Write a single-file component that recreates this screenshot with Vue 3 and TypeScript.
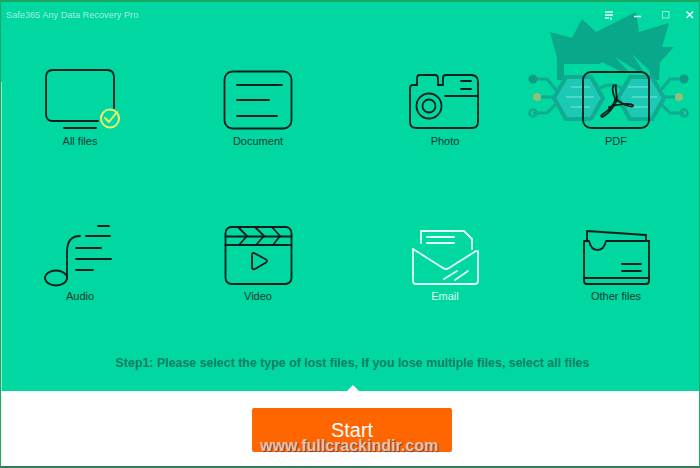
<script setup lang="ts">
const appTitle = 'Safe365 Any Data Recovery Pro'
const hint = 'Step1: Please select the type of lost files, If you lose multiple files, select all files'
</script>

<template>
  <div class="window">
    <div class="panel">
      <svg class="mascot" viewBox="525 10 170 115" width="170" height="115">
        <path class="hair" d="M550 32 L572 38 L582 19 L596 32 L636 12 L639 32 L669 23 L662 47 L674 47 L660 62 L659 80 L652 80 L649 70 L632 54 L644 72 L639 72 L615 57 L629 72 L622 72 L602 62 L600 64 L564 64 L564 80 L557 80 L557 58 Z" />
        <g class="wire">
          <path d="M533 79 H547 L557 91 M537 97 H553 M533 113 H547 L557 103" />
          <path d="M684 79 H670 L660 91 M679 97 H664 M684 113 H670 L660 103" />
          <path d="M600 88 Q610 82 622 88" />
        </g>
        <circle class="node" cx="533" cy="79" r="4.500" />
        <circle class="node-y" cx="537" cy="97" r="4" />
        <circle class="node-o" cx="533" cy="113" r="3.500" />
        <circle class="node" cx="684" cy="79" r="4.500" />
        <circle class="node-y" cx="679" cy="97" r="4" />
        <circle class="node-o" cx="684" cy="113" r="3.500" />
        <path class="hex" d="M566 77 H591 L603 98 L591 119 H566 L554 98 Z" />
        <path class="hex" d="M630 77 H652 L664 98 L652 119 H630 L618 98 Z" />
        <path class="glass" d="M571 87 H590 M566 97 H594 M571 107 H590 M628 87 H650 M632 97 H657 M628 107 H650" />
      </svg>

      <header class="titlebar">
        <span class="app-title">{{ appTitle }}</span>
        <div class="controls">
          <svg viewBox="0 0 9 9" width="9" height="9">
            <path d="M0 1 H8 M0 4 H8 M0 7 H4" stroke="#e4fff6" stroke-width="1.6" />
            <path d="M6 6 V9 M5 8 H7" stroke="#e4fff6" />
          </svg>
          <svg viewBox="0 0 8 8" width="8" height="8">
            <path d="M0 5.5 H7" stroke="#d8fff2" stroke-width="1.5" />
          </svg>
          <svg viewBox="0 0 8 8" width="8" height="8">
            <rect x="0.5" y="0.5" width="6.5" height="6.5" fill="none" stroke="#9cecd4" />
          </svg>
          <svg class="close" viewBox="0 0 8 8" width="8" height="8">
            <path d="M0.5 0.5 L7 7 M7 0.5 L0.5 7" stroke="#eafff9" stroke-width="1.5" />
          </svg>
        </div>
      </header>

      <div class="tiles">
        <div class="tile">
          <svg class="icon" viewBox="29 66 100 68">
            <path d="M97 121 H52 Q45 121 45 114 V77 Q45 70 52 70 H106 Q113 70 113 77 V108" />
            <path d="M63 128 H95" />
            <g class="check">
              <circle cx="109" cy="118.500" r="9" />
              <path d="M104 118 L108 122 L116 112" />
            </g>
          </svg>
          <span>All files</span>
        </div>

        <div class="tile">
          <svg class="icon" viewBox="208 66 100 68">
            <rect x="224.500" y="71.500" width="67" height="57" rx="8" />
            <path d="M237 85 H282 M237 100 H269 M237 116 H277" />
          </svg>
          <span>Document</span>
        </div>

        <div class="tile">
          <svg class="icon" viewBox="395 66 100 68">
            <path d="M410 88 Q410 85 413 85 H417 V78 Q417 75 420 75 H435 Q438 75 438 78 V85 H443 V78 Q443 75 446 75 H471 Q478 75 478 82 V122 Q478 128 472 128 H416 Q410 128 410 122 Z" />
            <path d="M461 81 H471 M461 89 H471 M445 96 H478" />
            <circle cx="429" cy="106" r="12.500" />
            <circle cx="429" cy="106" r="6.500" />
          </svg>
          <span>Photo</span>
        </div>

        <div class="tile">
          <svg class="icon" viewBox="566 66 100 68">
            <rect x="583" y="72" width="66" height="56" rx="8" />
            <path d="M614 85 C611 89 613 94 615 98 C616 103 608 111 603 114 C600 116 601 118 604 116 C609 113 614 106 617 100 C622 104 631 108 633 106 C634 103 620 103 609 107 M616 85 C615 89 617 94 617 100" />
          </svg>
          <span>PDF</span>
        </div>

        <div class="tile">
          <svg class="icon" viewBox="30 221 100 68">
            <ellipse cx="56" cy="278" rx="11" ry="7.500" />
            <path d="M67 278 V252 Q67 236 80 236 M86 236 H110 M98 226 H109 M76 248 H101 M76 259 H111 M76 270 H93" />
          </svg>
          <span>Audio</span>
        </div>

        <div class="tile">
          <svg class="icon" viewBox="208 221 100 68">
            <rect x="225.500" y="227" width="66" height="57" rx="6" />
            <path d="M225.500 236.500 H291.500 M225.500 245 H291.500" />
            <path d="M238 227 L247 236 L239 245 M255 227 L264 236 L256 245 M272 227 L280 236 L273 245" />
            <path d="M252 255 Q252 252 255 253.500 L266 259.500 Q268 261 266 262.500 L255 269 Q252 270 252 267 Z" />
          </svg>
          <span>Video</span>
        </div>

        <div class="tile light">
          <svg class="icon" viewBox="395 221 100 68">
            <path d="M421 243 V231 H464 L472 239 V249" />
            <path d="M427 237 H454 M427 243 H454" />
            <path d="M413 249 V281 Q413 284 416 284 H475 Q478 284 478 281 V251" />
            <path d="M413 249 L443 268 Q446 270 449 268 L476 251" />
            <path d="M444 279 L457 271 M455 280 L468 271" />
          </svg>
          <span>Email</span>
        </div>

        <div class="tile">
          <svg class="icon" viewBox="566 221 100 68">
            <path d="M587 241 V231 L646 235 V241" />
            <path d="M584 241 H589 Q591 250 597.500 250 Q604 250 606 241 H649 V281 Q649 284 646 284 H587 Q584 284 584 281 Z" />
            <path d="M584 278 H649 M622 264 H641 M622 271 H641" />
          </svg>
          <span>Other files</span>
        </div>
      </div>

      <p class="hint">{{ hint }}</p>
    </div>

    <div class="foot">
      <button class="start" type="button">Start</button>
    </div>

    <div class="watermark">www.fullcrackindir.com</div>
  </div>
</template>

<style>
html,
body {
  margin: 0;
  background: #fff;
}
</style>

<style scoped>
.window {
  position: relative;
  box-sizing: border-box;
  width: 700px;
  height: 468px;
  display: flex;
  flex-direction: column;
  border: 1px solid #1aa862;
  border-top-width: 2px;
  border-bottom: 2px solid #2f7d52;
  background: #fff;
  font-family: "Liberation Sans", Arial, sans-serif;
  overflow: hidden;
}

.panel {
  position: relative;
  height: 389px;
  flex: none;
  background: #00d7a1;
}

.panel::before {
  content: "";
  position: absolute;
  left: 0;
  top: 80px;
  bottom: 0;
  width: 1px;
  background: #8ee8cc;
}

.panel::after {
  content: "";
  position: absolute;
  left: 346px;
  bottom: 0;
  border-left: 6px solid transparent;
  border-right: 6px solid transparent;
  border-bottom: 6px solid #fff;
}

.mascot {
  position: absolute;
  left: 524px;
  top: 8px;
}

.hair {
  fill: #0aa88a;
}

.wire {
  fill: none;
  stroke: #10ab90;
  stroke-width: 3;
}

.node {
  fill: #0c9d83;
}

.node-y {
  fill: #8fc07a;
}

.node-o {
  fill: none;
  stroke: #10ab90;
  stroke-width: 2.500;
}

.hex {
  fill: #1cc9b4;
  stroke: #10ab90;
  stroke-width: 4;
}

.glass {
  fill: none;
  stroke: #7fe8d8;
  stroke-width: 1;
}

.titlebar {
  position: relative;
  height: 64px;
  display: flex;
  justify-content: space-between;
  align-items: flex-start;
  box-sizing: border-box;
  padding: 7px 5px 0 5px;
}

.app-title {
  font-size: 9.2px;
  line-height: 12px;
  color: #a5efd9;
}

.controls {
  display: flex;
  gap: 20px;
  margin-top: 2px;
}

.close {
  margin-left: -4px;
}

.tiles {
  position: relative;
  display: grid;
  grid-template-columns: 158px 198px 176px 166px;
  row-gap: 73px;
}

.tile {
  display: flex;
  flex-direction: column;
  align-items: center;
  font-size: 11px;
  line-height: 14px;
  color: #0b3a30;
}

.icon {
  display: block;
  width: 100px;
  height: 68px;
  fill: none;
  stroke: #0c1f1a;
  stroke-width: 1.800;
  stroke-linecap: round;
  stroke-linejoin: round;
}

.check {
  stroke: #eef26a;
  stroke-width: 2;
}

.light {
  color: #d9fff3;
}

.light .icon {
  stroke: #e2fff6;
}

.hint {
  position: relative;
  margin: 52px 0 0;
  padding-left: 5px;
  font-size: 12.400px;
  font-weight: 700;
  line-height: 16px;
  text-align: center;
  color: #0f7d66;
}

.foot {
  flex: 1;
  display: flex;
  justify-content: center;
  align-items: flex-start;
  padding: 17px 0 0 4px;
}

.start {
  width: 200px;
  height: 44px;
  border: 0;
  border-radius: 2px;
  background: #ff6600;
  color: #fff;
  font-family: inherit;
  font-size: 20px;
}

.watermark {
  position: absolute;
  left: 259px;
  top: 435px;
  font-size: 16px;
  font-weight: 700;
  line-height: 18px;
  color: #e9c2ac;
  text-shadow: 1px 1px 1px #5a4a40;
}
</style>
